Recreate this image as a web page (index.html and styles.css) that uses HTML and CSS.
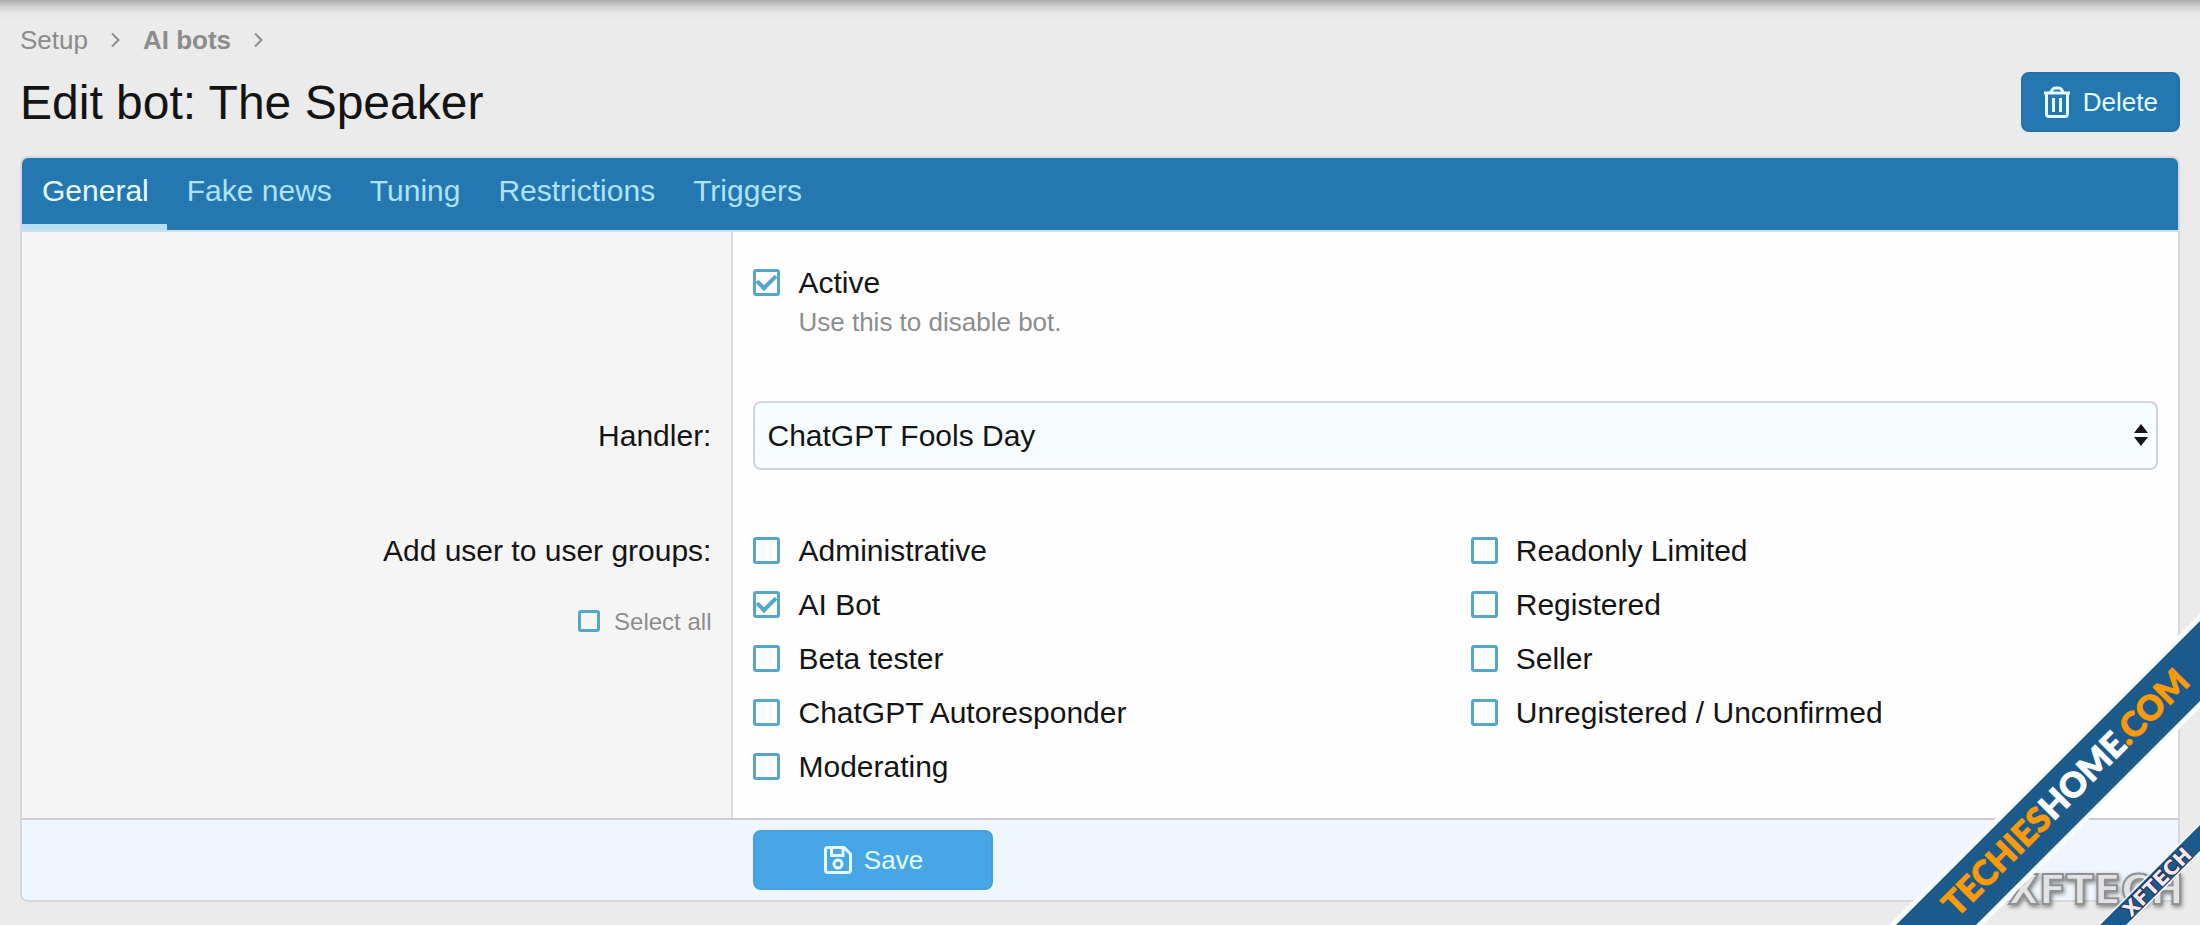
FILE: index.html
```html
<!DOCTYPE html>
<html lang="en">
<head>
<meta charset="utf-8">
<title>Edit bot: The Speaker</title>
<link rel="stylesheet" href="styles.css">
</head>
<body>
<div class="page">
  <nav class="breadcrumbs" aria-label="Breadcrumb">
    <a href="#">Setup</a>
    <svg class="chevron" viewBox="0 0 9 16" aria-hidden="true"><path d="M1 1.500l6.500 6.500-6.500 6.500"/></svg>
    <a class="current" href="#">AI bots</a>
    <svg class="chevron" viewBox="0 0 9 16" aria-hidden="true"><path d="M1 1.500l6.500 6.500-6.500 6.500"/></svg>
  </nav>

  <header class="title-row">
    <h1>Edit bot: The Speaker</h1>
    <button class="button" type="button">
      <svg class="icon-trash" viewBox="0 0 28 32" aria-hidden="true"><path d="M1 7h26M7.500 6.500l2.500-3.500q.8-1 2-1h4q1.200 0 2 1l2.500 3.500M3.500 7.500v20.500q0 2.500 2.500 2.500h16q2.500 0 2.500-2.500V7.500M10.500 12v14M17.500 12v14"/></svg>
      Delete
    </button>
  </header>

  <form class="panel">
    <nav class="tabs" aria-label="Bot settings">
      <a class="tab active" href="#">General</a>
      <a class="tab" href="#">Fake news</a>
      <a class="tab" href="#">Tuning</a>
      <a class="tab" href="#">Restrictions</a>
      <a class="tab" href="#">Triggers</a>
    </nav>

    <div class="row">
      <div class="label-cell"></div>
      <div class="field-cell">
        <label class="option"><input type="checkbox" checked aria-describedby="active-hint">Active</label>
        <p class="hint" id="active-hint">Use this to disable bot.</p>
      </div>
    </div>

    <div class="row">
      <div class="label-cell middle"><label for="handler">Handler:</label></div>
      <div class="field-cell">
        <div class="select-wrap">
          <select id="handler"><option>ChatGPT Fools Day</option></select>
          <svg class="arrows" viewBox="0 0 14 22" aria-hidden="true"><path d="M7 0l7 9H0zM7 22l7-9H0z"/></svg>
        </div>
      </div>
    </div>

    <div class="row" role="group" aria-labelledby="groups-label">
      <div class="label-cell">
        <span id="groups-label">Add user to user groups:</span>
        <label class="option small"><input type="checkbox">Select all</label>
      </div>
      <div class="field-cell groups">
        <label class="option"><input type="checkbox">Administrative</label>
        <label class="option"><input type="checkbox" checked>AI Bot</label>
        <label class="option"><input type="checkbox">Beta tester</label>
        <label class="option"><input type="checkbox">ChatGPT Autoresponder</label>
        <label class="option"><input type="checkbox">Moderating</label>
        <label class="option"><input type="checkbox">Readonly Limited</label>
        <label class="option"><input type="checkbox">Registered</label>
        <label class="option"><input type="checkbox">Seller</label>
        <label class="option"><input type="checkbox">Unregistered / Unconfirmed</label>
      </div>
    </div>

    <footer class="submit-row">
      <button class="button primary" type="button">
        <svg class="icon-save" viewBox="0 0 28 28" aria-hidden="true"><path d="M4 1.500h16l6.500 6.500V24q0 2.500-2.500 2.500H4Q1.500 26.500 1.500 24V4Q1.500 1.500 4 1.500zM7.500 2v7.500h11.500V2"/><circle cx="14" cy="18" r="4"/></svg>
        Save
      </button>
    </footer>
  </form>
</div>

<svg class="ribbons" viewBox="0 0 320 320" role="img" aria-label="techieshome.com, xftech">
  <text class="mark" x="216" y="299" text-anchor="middle">XFTECH</text>
  <path class="edge" d="M9 320L320 9v94L103 320z"/>
  <path class="band" d="M16 320L320 16v80L96 320z"/>
  <text class="brand" text-anchor="middle" transform="translate(194 196) rotate(-45)">TECHIES<tspan class="light">HOME</tspan>.COM</text>
  <path class="edge" d="M218 320l102-102v30l-72 72z"/>
  <path class="band" d="M220 320l100-100v26l-74 74z"/>
  <text class="mini" text-anchor="middle" transform="translate(282 282) rotate(-45)">XFTECH</text>
</svg>
</body>
</html>
```
FILE: styles.css
```css
* { box-sizing: border-box; }

body {
  margin: 0;
  min-height: 100vh;
  position: relative;
  overflow: hidden;
  color: #141414;
  background: linear-gradient(#acacac, #cfcfcf 6px, #e6e6e6 13px, #ebebeb 20px) #ebebeb;
  font: 30px/42px "Liberation Sans", Arial, sans-serif;
}

.page { padding: 22px 20px 20px; }

a { text-decoration: none; }

.breadcrumbs {
  display: flex;
  align-items: center;
  gap: 23px;
  font-size: 26px;
  line-height: 36px;
}
.breadcrumbs a { color: #8c8c8c; }
.breadcrumbs .current { font-weight: bold; }
.chevron {
  width: 9px;
  height: 16px;
  fill: none;
  stroke: #8c8c8c;
  stroke-width: 2;
}

.title-row {
  display: flex;
  justify-content: space-between;
  align-items: flex-start;
  margin: 14px 0 22px;
}
h1 {
  margin: 0;
  font-size: 48px;
  font-weight: normal;
  line-height: 62px;
}

.button {
  display: flex;
  align-items: center;
  justify-content: center;
  gap: 12px;
  height: 60px;
  padding: 0 20px;
  border: 2px solid #2370aa;
  border-radius: 8px;
  background: #2577b1;
  color: #e4fcff;
  font: inherit;
  font-size: 26px;
}
.button svg {
  fill: none;
  stroke: currentColor;
  stroke-width: 3;
}
.icon-trash { width: 28px; height: 32px; }
.icon-save { width: 28px; height: 28px; }
.button.primary {
  min-width: 240px;
  border-color: #459fdb;
  background: #47a7e6;
}

.panel {
  border: 2px solid #d3d9de;
  border-radius: 8px;
  background: #fefefe;
  overflow: hidden;
}

.tabs {
  display: flex;
  background: #2577b1;
  border-bottom: 2px solid #cfe0ec;
}
.tab {
  padding: 12px 18px 12px 20px;
  border-bottom: 6px solid transparent;
  color: #abe4fb;
}
.tab.active {
  border-color: #b8dff6;
  color: #e9ffff;
}

.row {
  display: grid;
  grid-template-columns: 33% 1fr;
}
.label-cell {
  padding: 30px 20px 30px 0;
  border-right: 2px solid #dcdcde;
  background: #f5f5f5;
  text-align: right;
}
.label-cell.middle {
  display: flex;
  align-items: center;
  justify-content: flex-end;
}
.field-cell { padding: 30px 20px; }

.option {
  display: flex;
  align-items: center;
  gap: 18px;
}
.option input {
  appearance: none;
  flex: none;
  display: grid;
  place-items: center;
  width: 27px;
  height: 27px;
  margin: 0 0 2px;
  border: 3px solid #56a5cb;
  border-radius: 3px;
}
.option input:checked::before {
  content: "";
  width: 15px;
  height: 8px;
  margin-bottom: 4px;
  border: solid #56a5cb;
  border-width: 0 0 4px 4px;
  transform: rotate(-45deg);
}
.option.small {
  justify-content: flex-end;
  gap: 14px;
  margin-top: 33px;
  color: #8c8c8c;
  font-size: 24px;
  line-height: 34px;
}
.option.small input { width: 22px; height: 22px; }

.hint {
  margin: 0 0 0 45px;
  color: #8c8c8c;
  font-size: 26px;
  line-height: 37px;
}

.select-wrap { position: relative; }
select {
  appearance: none;
  display: block;
  width: 100%;
  height: 69px;
  padding: 0 50px 0 12px;
  border: 2px solid #d0d4d8;
  border-radius: 8px;
  background: linear-gradient(#f4fdfd, #f8fcff);
  color: inherit;
  font: inherit;
}
.arrows {
  position: absolute;
  top: 23px;
  right: 10px;
  width: 14px;
  height: 22px;
  fill: #141414;
  pointer-events: none;
}

.groups {
  display: grid;
  grid-template-columns: 1fr 1fr;
  grid-template-rows: repeat(5, auto);
  grid-auto-flow: column;
  gap: 12px 30px;
}

.submit-row {
  display: flex;
  padding: 10px 20px 10px calc(33% + 20px);
  border-top: 2px solid #cacdd2;
  background: #f0f6fe;
}

.ribbons {
  position: absolute;
  right: 0;
  bottom: 0;
  width: 320px;
  height: 320px;
  pointer-events: none;
}
.edge { fill: #ffffff; }
.band { fill: #1b5a8a; }
.brand {
  fill: #fb9a08;
  stroke: #fb9a08;
  stroke-width: 1;
  font: 900 34px Lato, sans-serif;
}
.brand .light {
  fill: #ffffff;
  stroke: #ffffff;
}
.mark {
  fill: #e3e3e3;
  stroke: #8f9194;
  stroke-width: 2;
  font: bold 40px "DejaVu Sans", sans-serif;
  filter: drop-shadow(1px 2px 2px #808080);
}
.mini {
  fill: #f3e9f5;
  stroke: #2c2c50;
  stroke-width: 2;
  paint-order: stroke;
  font: bold 20px "DejaVu Sans", sans-serif;
}
```
